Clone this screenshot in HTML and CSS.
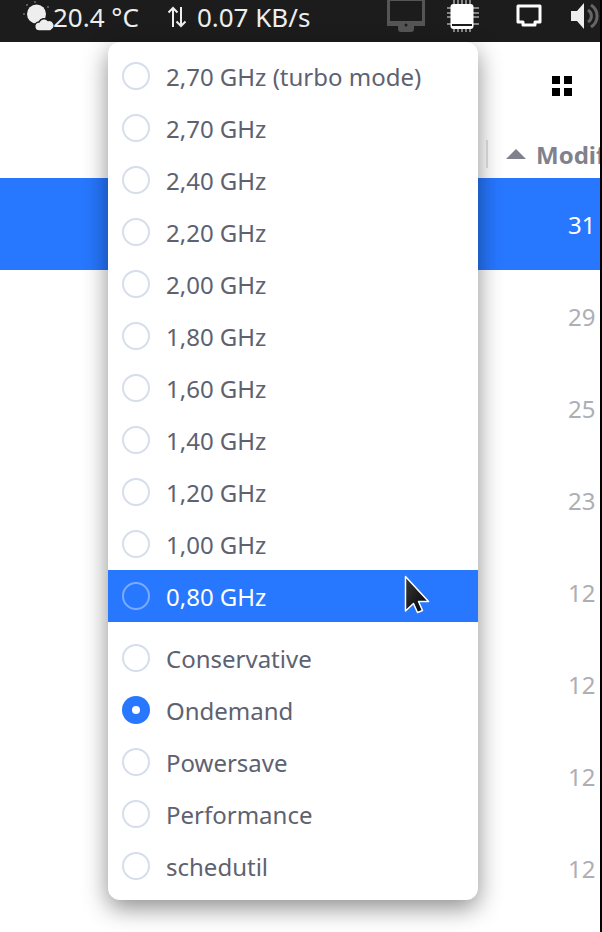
FILE: index.html
```html
<html>
    <head>
        <link rel="stylesheet" href="styles.css">
    </head>

    <body>
        <div class="topbar">
            <div class="indicator-left">
                <svg class="icon-weather" width="38" height="34" viewBox="0 0 38 34">
                    <g fill="#6e6e6e">
                        <circle cx="13" cy="2" r="1"/><circle cx="26" cy="7" r="1"/><circle cx="2" cy="14" r="1"/><circle cx="5" cy="5" r="1"/>
                    </g>
                    <circle cx="14.500" cy="14" r="9.500" fill="#eeeeee"/>
                    <path d="M17.500 31a4.500 4.500 0 0 1 -.5 -9a5.500 5.500 0 0 1 9 -1.500a5 5 0 0 1 4 9q-.5 1.500 -2 1.500z" fill="#eeeeee" stroke="#1c1c1c" stroke-width="1.500"/>
                </svg>
                <span class="temp">20.4 °C</span>
                <svg class="icon-updown" width="20" height="24" viewBox="0 0 20 24">
                    <path d="M6 22V3M1.500 7.500 6 3l4.500 4.500M14 2v19M9.500 16.500 14 21l4.500-4.500" fill="none" stroke="#eeeeee" stroke-width="2"/>
                </svg>
                <span class="speed">0.07 KB/s</span>
            </div>
            <div class="indicator-right">
                <svg class="icon-display" width="38" height="33" viewBox="0 0 38 33">
                    <path d="M0 0h38v26H27v3q0 3-3 3H14q-3 0-3-3v-3H0z" fill="#555555"/>
                    <rect x="3" y="1" width="32" height="20" fill="#1c1c1c"/>
                    <circle cx="19" cy="25" r="1.500" fill="#1c1c1c"/>
                </svg>
                <svg class="icon-cpu" width="32" height="32" viewBox="0 0 32 32">
                    <path d="M7 0v32M11 0v32M15 0v32M19 0v32M23 0v32M0 8h32M0 13h32M0 17h32M0 24h32" stroke="#eeeeee" stroke-width="1"/>
                    <rect x="3.500" y="4" width="23" height="25" rx="3" fill="#ffffff"/>
                    <rect x="5" y="24" width="20" height="2" fill="#1c1c1c"/>
                </svg>
                <svg class="icon-net" width="26" height="24" viewBox="0 0 26 24">
                    <path d="M2 2h22v16h-5v3H7v-3H2z" fill="none" stroke="#ffffff" stroke-width="3" stroke-linejoin="round"/>
                </svg>
                <svg class="icon-volume" width="30" height="30" viewBox="0 0 30 30">
                    <path d="M1 10h6l7-8v26l-7-8H1z" fill="#eeeeee"/>
                    <path d="M18 9a7 7 0 0 1 0 12M21 4a13 13 0 0 1 0 22" fill="none" stroke="#666666" stroke-width="3"/>
                </svg>
            </div>
        </div>

        <div class="files">
            <div class="toolbar">
                <svg class="icon-grid" width="20" height="20" viewBox="0 0 20 20">
                    <path d="M0 0h8v8H0zM12 0h8v8h-8zM0 12h8v8H0zM12 12h8v8h-8z" fill="#000000"/>
                </svg>
            </div>
            <div class="column-head">
                <span class="column-sep"></span>
                <span class="sort-arrow"></span>
                <span class="column-title">Modified</span>
            </div>
            <div class="file-row selected"><span>31</span></div>
            <div class="file-row"><span>29</span></div>
            <div class="file-row"><span>25</span></div>
            <div class="file-row"><span>23</span></div>
            <div class="file-row"><span>12</span></div>
            <div class="file-row"><span>12</span></div>
            <div class="file-row"><span>12</span></div>
            <div class="file-row"><span>12</span></div>
        </div>

        <div class="menu">
            <div class="menu-item"><span class="radio"></span>2,70 GHz (turbo mode)</div>
            <div class="menu-item"><span class="radio"></span>2,70 GHz</div>
            <div class="menu-item"><span class="radio"></span>2,40 GHz</div>
            <div class="menu-item"><span class="radio"></span>2,20 GHz</div>
            <div class="menu-item"><span class="radio"></span>2,00 GHz</div>
            <div class="menu-item"><span class="radio"></span>1,80 GHz</div>
            <div class="menu-item"><span class="radio"></span>1,60 GHz</div>
            <div class="menu-item"><span class="radio"></span>1,40 GHz</div>
            <div class="menu-item"><span class="radio"></span>1,20 GHz</div>
            <div class="menu-item"><span class="radio"></span>1,00 GHz</div>
            <div class="menu-item hover"><span class="radio"></span>0,80 GHz</div>
            <div class="menu-gap"></div>
            <div class="menu-item"><span class="radio"></span>Conservative</div>
            <div class="menu-item"><span class="radio checked"></span>Ondemand</div>
            <div class="menu-item"><span class="radio"></span>Powersave</div>
            <div class="menu-item"><span class="radio"></span>Performance</div>
            <div class="menu-item"><span class="radio"></span>schedutil</div>
        </div>

        <svg class="cursor" width="26" height="40" viewBox="0 0 26 40">
            <defs>
                <linearGradient id="cursor-fill" x1="0" y1="0" x2="1" y2="1">
                    <stop offset="0" stop-color="#3a3a3a"/>
                    <stop offset="1" stop-color="#000000"/>
                </linearGradient>
            </defs>
            <path d="M1.500 1.500V36l8-7.500 4 9 5-2-4-9h10z" fill="url(#cursor-fill)" stroke="#ffffff" stroke-width="1.500" stroke-linejoin="round"/>
        </svg>

        <div class="screen-edge"></div>
    </body>
</html>
```

FILE: styles.css
```css
html, body {
    height: 100%;
}

body {
    margin: 0;
    overflow: hidden;
    background-color: white;
    font-family: "Noto Sans", sans-serif;
    color: #5e6270;
}

.topbar {
    display: flex;
    justify-content: space-between;
    align-items: flex-start;
    height: 42px;
    background-color: #1c1c1c;
    color: #eeeeee;
    font-size: 26px;
}

.indicator-left {
    display: flex;
    align-items: center;
    height: 33px;
    padding-left: 22px;
}

.indicator-right {
    display: flex;
    align-items: flex-start;
}

.icon-weather {
    margin-right: -7px;
}

.temp {
    margin-right: 28px;
}

.icon-updown {
    margin-right: 10px;
}

.icon-cpu {
    margin-left: 22px;
}

.icon-net {
    margin-left: 37px;
    margin-top: 4px;
}

.icon-volume {
    margin-left: 28px;
    margin-right: 2px;
    margin-top: 1px;
}

.toolbar {
    display: flex;
    justify-content: flex-end;
    align-items: center;
    height: 88px;
    padding-right: 30px;
}

.column-head {
    display: flex;
    align-items: center;
    height: 48px;
    padding-left: 486px;
    box-sizing: border-box;
    white-space: nowrap;
    overflow: hidden;
}

.column-sep {
    flex-shrink: 0;
    width: 2px;
    height: 28px;
    background-color: #e2e2e2;
    margin-right: 18px;
}

.sort-arrow {
    flex-shrink: 0;
    width: 0;
    height: 0;
    border-left: 10px solid transparent;
    border-right: 10px solid transparent;
    border-bottom: 10px solid #7f828c;
    margin-right: 10px;
}

.column-title {
    font-size: 24px;
    font-weight: bold;
    color: #7f828c;
}

.file-row {
    display: flex;
    align-items: center;
    height: 92px;
    padding-left: 568px;
    box-sizing: border-box;
    font-size: 24px;
    color: #adafb6;
    white-space: nowrap;
}

.file-row.selected {
    background-color: #2777ff;
    color: white;
}

.menu {
    position: absolute;
    left: 108px;
    top: 42px;
    width: 370px;
    height: 858px;
    box-sizing: border-box;
    padding: 8px 0;
    background-color: white;
    border-radius: 12px;
    box-shadow: 0 8px 24px rgba(0, 0, 0, 0.45);
    font-size: 24px;
}

.menu-item {
    display: flex;
    align-items: center;
    gap: 16px;
    height: 52px;
    padding-left: 14px;
    white-space: nowrap;
}

.menu-item.hover {
    background-color: #2777ff;
    color: white;
}

.menu-gap {
    height: 10px;
}

.radio {
    width: 28px;
    height: 28px;
    box-sizing: border-box;
    border: 2px solid #d6deec;
    border-radius: 50%;
}

.menu-item.hover .radio {
    border-color: #7aabff;
}

.radio.checked {
    display: flex;
    align-items: center;
    justify-content: center;
    border: none;
    background-color: #2777ff;
}

.radio.checked::after {
    content: "";
    width: 8px;
    height: 8px;
    border-radius: 50%;
    background-color: white;
}

.cursor {
    position: absolute;
    left: 404px;
    top: 575px;
}

.screen-edge {
    position: absolute;
    top: 0;
    right: 0;
    width: 2px;
    height: 100%;
    background-color: black;
}
```
